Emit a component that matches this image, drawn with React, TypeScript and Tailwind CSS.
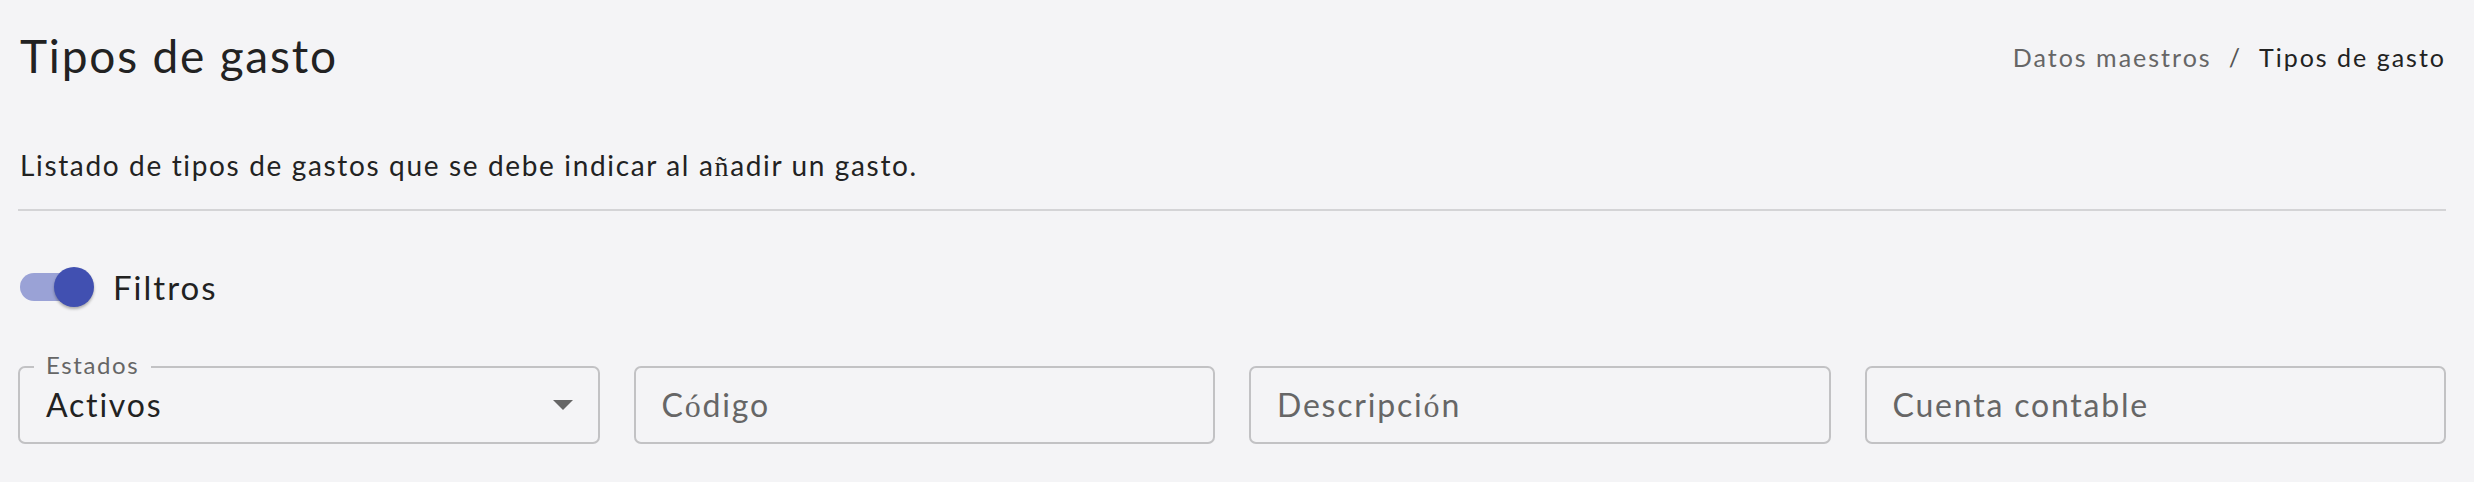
import React from 'react';

const font = { fontFamily: 'Lato, "Noto Sans", sans-serif' };

// el glifo acentuado sale con otra fuente en el original
function Alt({ children }: { children: React.ReactNode }) {
  return <span style={{ fontFamily: '"Liberation Serif", serif' }}>{children}</span>;
}

function OutlinedField({ label, value, placeholder, select }: { label?: string; value?: React.ReactNode; placeholder?: React.ReactNode; select?: boolean }) {
  return (
    <div className="relative h-[78px] rounded-[7px] border-2 border-[#c2c2c4] flex items-center pl-[26px] pr-[25px]">
      {label && (
        <span className="absolute left-[14px] top-[-17px] px-[12px] bg-[#f4f4f6] text-[24px] leading-[28px] tracking-[1.6px] text-[#666]">
          {label}
        </span>
      )}
      <div className={`flex-1 text-[32px] leading-[40px] tracking-[1.8px] ${value ? 'text-[#222]' : 'text-[#666]'}`}>
        {value ?? placeholder}
      </div>
      {select && (
        <svg width="20" height="10" viewBox="0 0 20 10" className="shrink-0">
          <path d="M0 0 L20 0 L10 10 Z" fill="#666" />
        </svg>
      )}
    </div>
  );
}

export default function App() {
  return (
    <div className="min-h-screen bg-[#f4f4f6] pl-[18px] pr-[28px] text-[#222]" style={font}>
      {/* cabecera */}
      <div className="flex justify-between items-start pt-[28px]">
        <h1 className="text-[46px] leading-[56px] pl-[2px] tracking-[1.8px]">Tipos de gasto</h1>
        <div className="flex items-center text-[25px] leading-[30px] mt-[14px] tracking-[2px]">
          <span className="text-[#666]">Datos maestros</span>
          <span className="mx-[17px] text-[#555]">/</span>
          <span className="text-[#222]">Tipos de gasto</span>
        </div>
      </div>

      <p className="mt-[64px] text-[28px] leading-[34px] pl-[2px] tracking-[1.65px]">
        Listado de tipos de gastos que se debe indicar al a<Alt>ñ</Alt>adir un gasto.
      </p>
      <div className="mt-[25px] h-[2px] bg-[#d4d4d6]" />

      {/* filtros */}
      <div className="mt-[56px] flex items-center h-[40px]">
        <div className="relative w-[76px] h-[40px] flex items-center">
          <div className="ml-[2px] w-[68px] h-[28px] rounded-full bg-[#9aa2d6]" />
          <div className="absolute left-[36px] top-0 w-[40px] h-[40px] rounded-full bg-[#4150b1] shadow-[0_2px_3px_rgba(0,0,0,0.3)]" />
        </div>
        <span className="ml-[19px] text-[33px] leading-[40px] tracking-[2px]">Filtros</span>
      </div>

      <div className="mt-[59px] grid grid-cols-4 gap-[34px]">
        <OutlinedField label="Estados" value="Activos" select />
        <OutlinedField placeholder={<>C<Alt>ó</Alt>digo</>} />
        <OutlinedField placeholder={<>Descripci<Alt>ó</Alt>n</>} />
        <OutlinedField placeholder="Cuenta contable" />
      </div>
    </div>
  );
}
